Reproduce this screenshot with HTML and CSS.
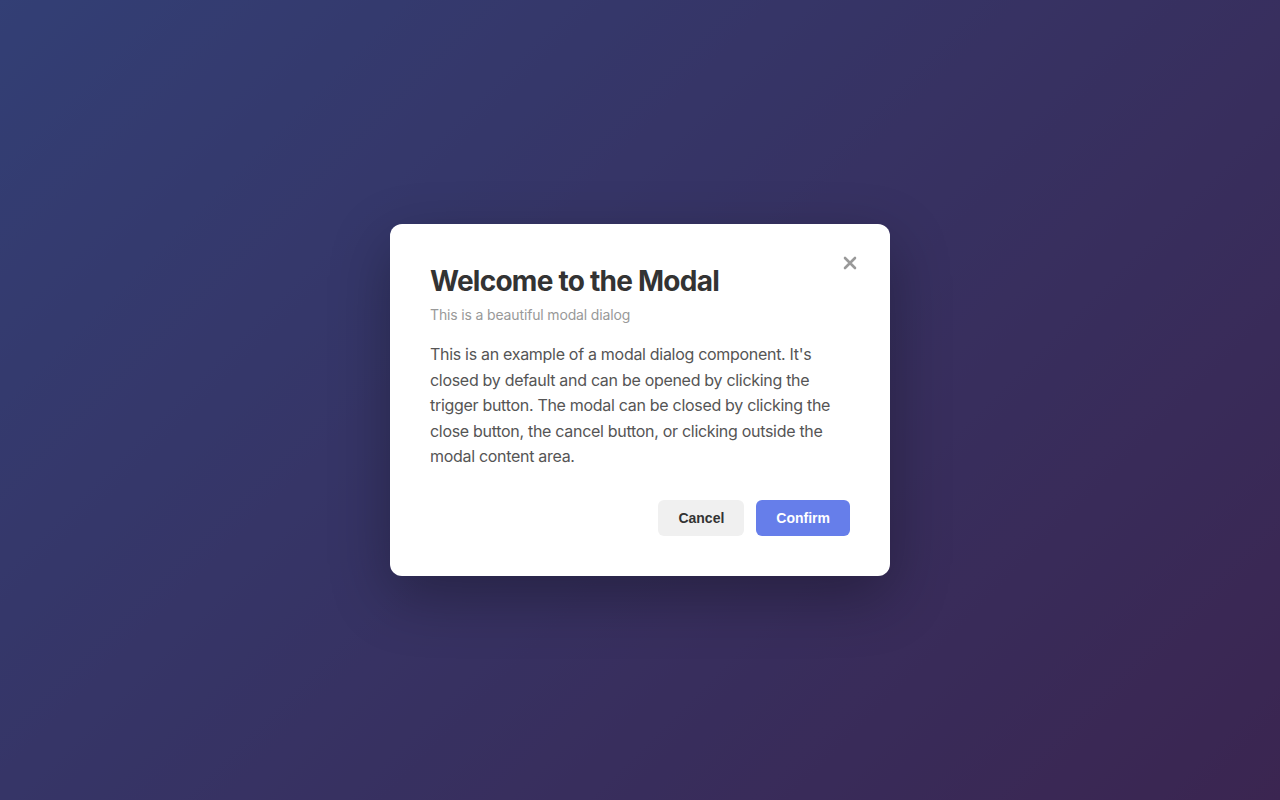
FILE: index.html
```html
<!DOCTYPE html>
<html lang="en">
<head>
<meta charset="utf-8">
<title>Modal</title>
<link rel="stylesheet" href="styles.css">
</head>
<body>
<div class="overlay">
  <div class="modal">
    <button class="close" aria-label="Close">
      <svg width="14" height="14" viewBox="0 0 14 14"><path d="M2 2L12 12M12 2L2 12" stroke="#999" stroke-width="2.6" stroke-linecap="round" fill="none"/></svg>
    </button>
    <h2 class="title">Welcome to the Modal</h2>
    <p class="subtitle">This is a beautiful modal dialog</p>
    <p class="body">This is an example of a modal dialog component. It's closed by default and can be opened by clicking the trigger button. The modal can be closed by clicking the close button, the cancel button, or clicking outside the modal content area.</p>
    <div class="actions">
      <button class="btn btn-cancel">Cancel</button>
      <button class="btn btn-confirm">Confirm</button>
    </div>
  </div>
</div>
</body>
</html>
```
FILE: styles.css
```css
html, body {
  margin: 0;
  padding: 0;
  height: 100%;
}
body {
  background: linear-gradient(135deg, #667eea 0%, #764ba2 100%);
  font-family: Inter, "Noto Sans", sans-serif;
}
.overlay {
  height: 100%;
  background: rgba(0, 0, 0, 0.5);
  display: flex;
  align-items: center;
  justify-content: center;
}
.modal {
  position: relative;
  box-sizing: border-box;
  width: 500px;
  background: #fff;
  border-radius: 12px;
  padding: 40px;
  box-shadow: 0 20px 60px rgba(0, 0, 0, 0.3);
}
.close {
  position: absolute;
  top: 25px;
  right: 26px;
  width: 28px;
  height: 28px;
  border: none;
  background: transparent;
  padding: 0;
  display: flex;
  align-items: center;
  justify-content: center;
  cursor: pointer;
}
.title {
  margin: 0 0 8px;
  font-size: 28px;
  line-height: 34px;
  font-weight: 700;
  letter-spacing: -0.75px;
  color: #333;
}
.subtitle {
  margin: 0 0 19px;
  font-size: 14px;
  line-height: 17px;
  letter-spacing: -0.15px;
  color: #999;
}
.body {
  margin: 0 0 30px;
  font-size: 16px;
  line-height: 1.6;
  letter-spacing: -0.3px;
  color: #555;
}
.actions {
  display: flex;
  justify-content: flex-end;
  gap: 12px;
}
.btn {
  height: 36px;
  padding: 0 20px;
  border: none;
  border-radius: 6px;
  font-family: "Liberation Sans", Arial, sans-serif;
  font-size: 14px;
  font-weight: 700;
  cursor: pointer;
}
.btn-cancel {
  background: #f0f0f0;
  color: #333;
}
.btn-confirm {
  background: #667eea;
  color: #fff;
}
```
